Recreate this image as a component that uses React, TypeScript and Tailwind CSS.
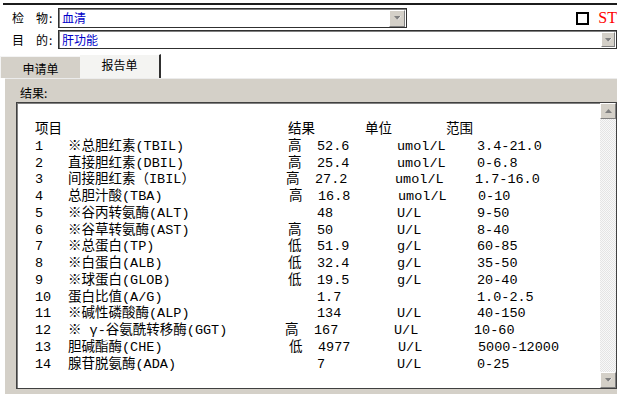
import React from "react"

// 结果行：序号、项目、标记、结果、单位、范围
interface ResultRow {
  no: string
  name: string
  flag: string
  value: string
  unit: string
  range: string
  nudge?: string
}

const rows: ResultRow[] = [
  { no: "1", name: "※总胆红素(TBIL)", flag: "高", value: "52.6", unit: "umol/L", range: "3.4-21.0" },
  { no: "2", name: "直接胆红素(DBIL)", flag: "高", value: "25.4", unit: "umol/L", range: "0-6.8" },
  { no: "3", name: "间接胆红素（IBIL）", flag: "高", value: "27.2", unit: "umol/L", range: "1.7-16.0", nudge: "-ml-[2px]" },
  { no: "4", name: "总胆汁酸(TBA)", flag: "高", value: "16.8", unit: "umol/L", range: "0-10", nudge: "ml-[1px]" },
  { no: "5", name: "※谷丙转氨酶(ALT)", flag: "", value: "48", unit: "U/L", range: "9-50" },
  { no: "6", name: "※谷草转氨酶(AST)", flag: "高", value: "50", unit: "U/L", range: "8-40" },
  { no: "7", name: "※总蛋白(TP)", flag: "低", value: "51.9", unit: "g/L", range: "60-85" },
  { no: "8", name: "※白蛋白(ALB)", flag: "低", value: "32.4", unit: "g/L", range: "35-50" },
  { no: "9", name: "※球蛋白(GLOB)", flag: "低", value: "19.5", unit: "g/L", range: "20-40" },
  { no: "10", name: "蛋白比值(A/G)", flag: "", value: "1.7", unit: "", range: "1.0-2.5" },
  { no: "11", name: "※碱性磷酸酶(ALP)", flag: "", value: "134", unit: "U/L", range: "40-150" },
  { no: "12", name: "※ γ-谷氨酰转移酶(GGT)", flag: "高", value: "167", unit: "U/L", range: "10-60", nudge: "-ml-[3px]" },
  { no: "13", name: "胆碱酯酶(CHE)", flag: "低", value: "4977", unit: "U/L", range: "5000-12000", nudge: "ml-[1px]" },
  { no: "14", name: "腺苷脱氨酶(ADA)", flag: "", value: "7", unit: "U/L", range: "0-25" },
]

function Arrow({ up = false }: { up?: boolean }) {
  return (
    <svg width="9" height="6" viewBox="0 0 9 6">
      {up ? (
        <path d="M1 5 L4.5 1 L8 5 Z" fill="#808080" />
      ) : (
        <>
          <path d="M1 1 L8 1 L4.5 5 Z" fill="#808080" />
          <path d="M4.5 5 L8 1" stroke="#ffffff" strokeWidth="0.8" />
        </>
      )}
    </svg>
  )
}

function DropButton({ className }: { className: string }) {
  return (
    <div
      className={`flex items-center justify-center bg-[#d4d0c8] border border-t-white border-l-white border-r-[#808080] border-b-[#808080] ${className}`}
    >
      <Arrow />
    </div>
  )
}

export default function App() {
  return (
    <div className="w-[621px] h-[394px] bg-white flex flex-col overflow-hidden font-['Noto_Sans_CJK_SC',sans-serif] text-[12px] text-black">
      <div className="mt-[3px] ml-[3px] w-[614px] h-[2px] bg-[#1c1c1c]" />

      {/* 检物 */}
      <div className="mt-[3px] h-[20px] flex items-center">
        <span className="ml-[12px] w-[24px] leading-none">检</span>
        <span className="w-[13px] leading-none">物</span>
        <span className="w-[9px] leading-none">:</span>
        <div className="w-[349px] h-[20px] flex items-center border border-[#303030] shadow-[inset_1px_1px_0_#808080] pl-[3px]">
          <span className="flex-1 text-[#0000c8] leading-none">血清</span>
          <DropButton className="w-[16px] h-[17px] mr-[1px]" />
        </div>
        <div className="ml-auto w-[13px] h-[13px] border-2 border-black" />
        <span className="ml-[9px] mr-[4px] font-['Liberation_Serif',serif] text-[16px] text-[#ff0000] leading-none">ST</span>
      </div>

      {/* 目的 */}
      <div className="mt-[2px] h-[19px] flex items-center">
        <span className="ml-[12px] w-[24px] leading-none">目</span>
        <span className="w-[13px] leading-none">的</span>
        <span className="w-[9px] leading-none">:</span>
        <div className="w-[559px] h-[19px] flex items-center border border-[#303030] shadow-[inset_1px_1px_0_#808080] pl-[3px]">
          <span className="flex-1 text-[#0000c8] leading-none">肝功能</span>
          <DropButton className="w-[14px] h-[15px] mr-[1px]" />
        </div>
      </div>

      {/* 标签页 */}
      <div className="mt-[5px] h-[24px] flex items-end">
        <div className="w-[80px] h-[22px] bg-[#d4d0c8] border-t border-l border-[#f4f4f4] flex items-center justify-center pt-[2px]">
          申请单
        </div>
        <div className="w-[81px] h-[24px] bg-[#f4f4f2] border-t border-t-white border-r-2 border-r-[#303030] flex items-center justify-center pb-[4px]">
          报告单
        </div>
      </div>

      {/* 报告内容 */}
      <div className="flex-1 ml-[5px] w-[612px] bg-[#d4d0c8] border-t border-t-[#ececec] flex flex-col">
        <div className="ml-[15px] mt-[7px] h-[13px] leading-[13px]">结果:</div>
        <div className="ml-[11px] mt-[3px] w-[601px] h-[287px] bg-white border border-[#404040] shadow-[inset_1px_1px_0_#808080] flex">
          <div className="flex-1 pl-[18px] pt-[19px] font-['Liberation_Mono','Noto_Sans_CJK_SC',monospace] text-[13.5px] leading-[16.75px]">
            <div className="flex">
              <span className="w-[253px]">项目</span>
              <span className="w-[77px]">结果</span>
              <span className="w-[81px]">单位</span>
              <span>范围</span>
            </div>
            {rows.map((r) => (
              <div key={r.no} className="flex whitespace-pre">
                <span className="w-[33px]">{r.no}</span>
                <span className="w-[220px]">{r.name}</span>
                <div className={`flex ${r.nudge ?? ""}`}>
                  <span className="w-[29px]">{r.flag}</span>
                  <span className="w-[80px]">{r.value}</span>
                  <span className="w-[80px]">{r.unit}</span>
                  <span>{r.range}</span>
                </div>
              </div>
            ))}
          </div>
          <div className="w-[16px] flex flex-col">
            <div className="h-[16px] bg-[#d4d0c8] border border-t-white border-l-white border-r-[#808080] border-b-[#808080] flex items-center justify-center">
              <Arrow up />
            </div>
            <div className="flex-1 bg-[repeating-conic-gradient(#e4e4e4_0%_25%,#f8f8f8_0%_50%)] bg-[length:2px_2px]" />
            <div className="h-[16px] bg-[#d4d0c8] border border-t-white border-l-white border-r-[#808080] border-b-[#808080] flex items-center justify-center">
              <Arrow />
            </div>
          </div>
        </div>
      </div>
    </div>
  )
}
